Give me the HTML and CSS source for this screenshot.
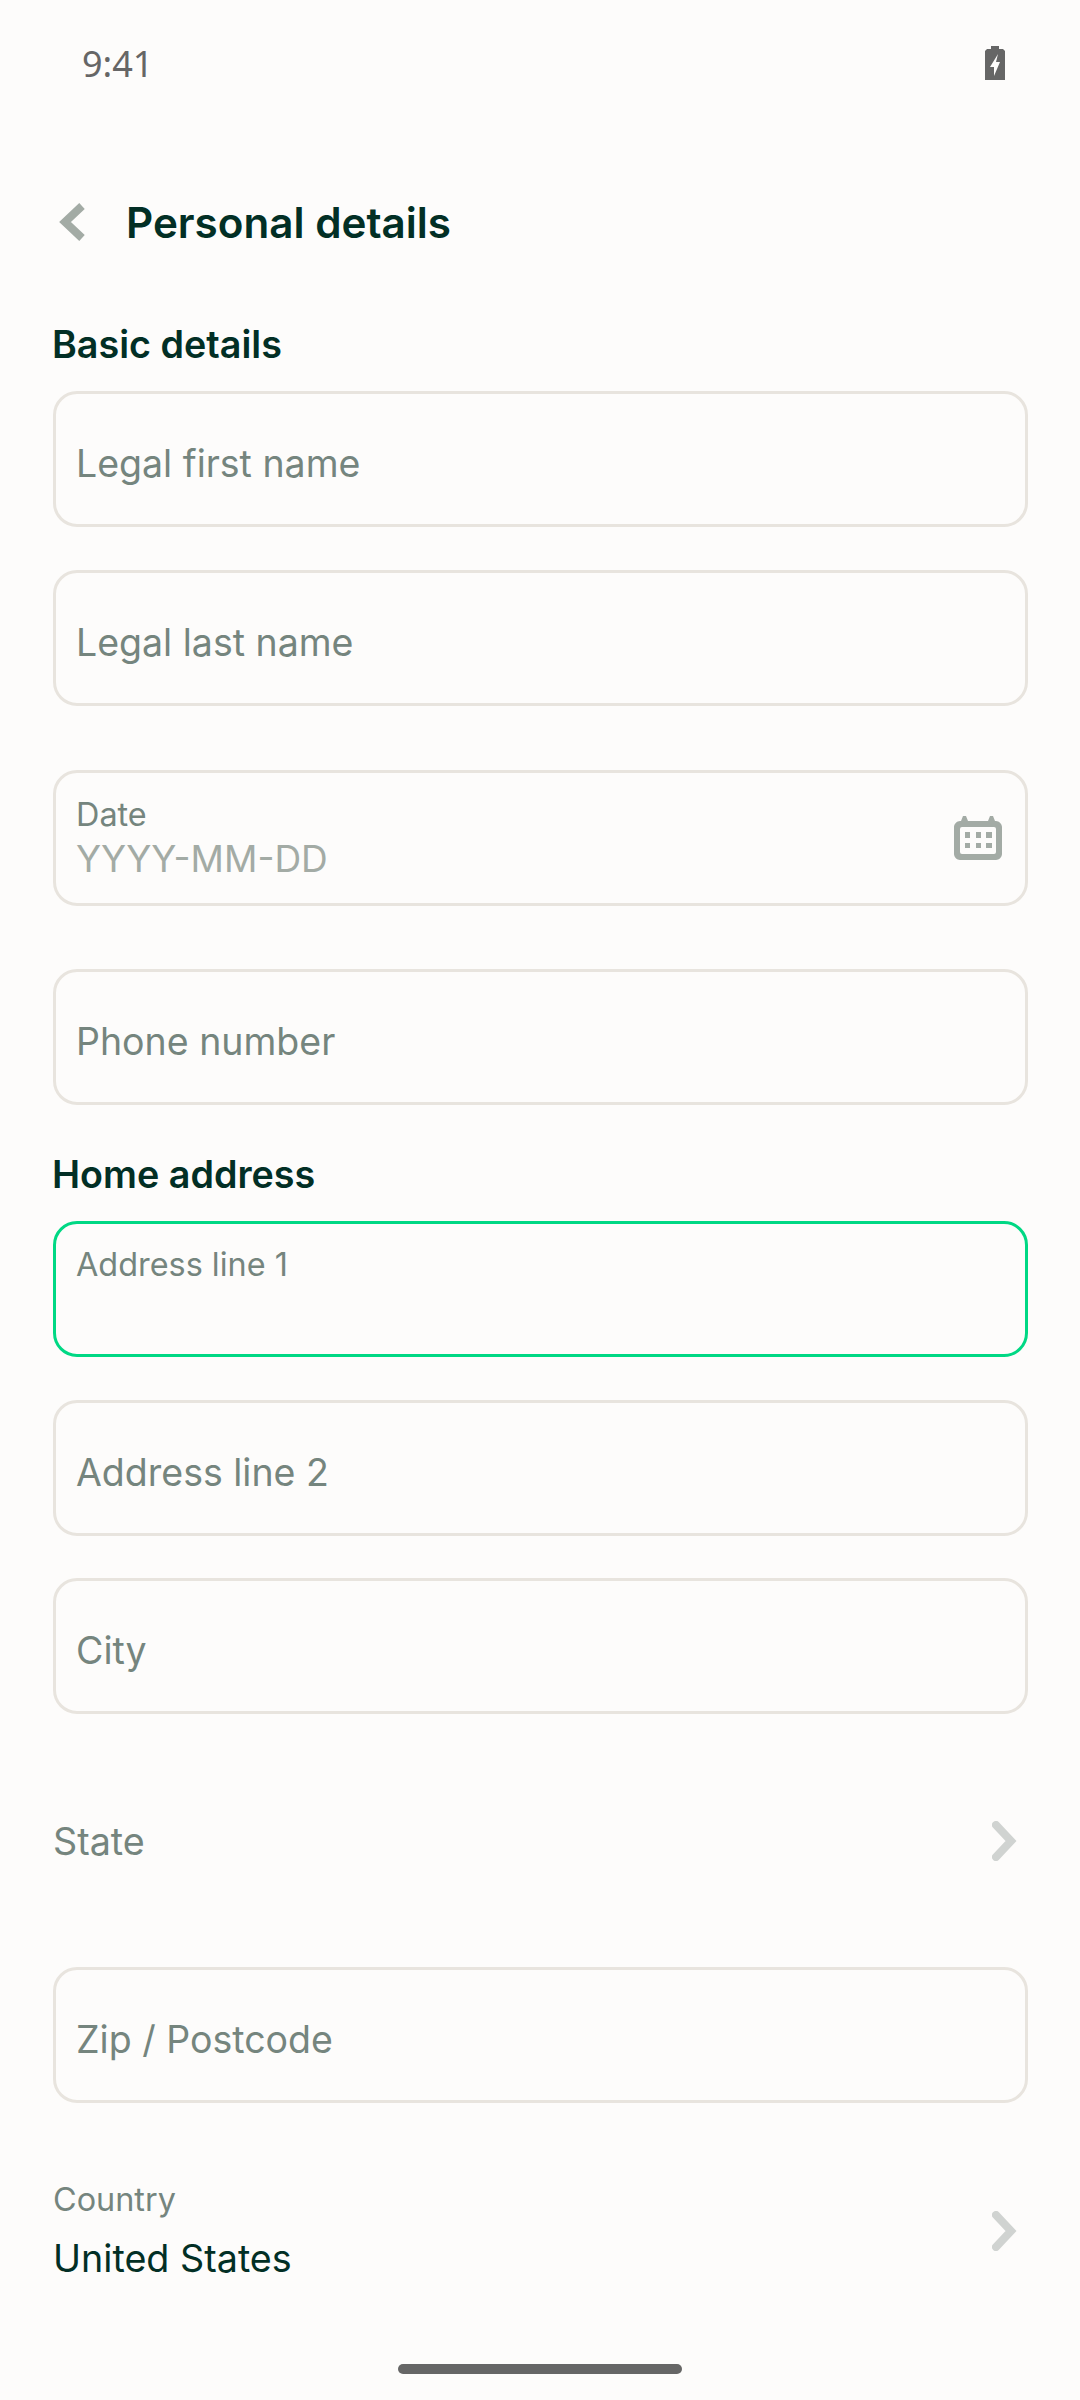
FILE: index.html
```html
<!DOCTYPE html>
<html lang="en">
<head>
    <meta charset="UTF-8">
    <meta name="viewport" content="width=device-width, initial-scale=1.0">
    <title>Personal details</title>
    <link rel="stylesheet" href="styles.css">
</head>
<body>
    <div class="status-bar">
        <span class="status-time">9:41</span>
        <svg class="status-battery" width="20" height="34" viewBox="0 0 20 34">
            <path fill="#666" d="M6 0h8v3h4l2 2v29H0V5l2-2h4z"/>
            <path fill="#fdfcfb" d="M13 8 5 21h4v9l6-14h-4z"/>
        </svg>
    </div>

    <div class="header">
        <svg class="back-icon" width="28" height="38" viewBox="0 0 28 38">
            <path fill="none" stroke="#a3aba5" stroke-width="8" stroke-linejoin="miter" d="M25 3 8 19l17 16"/>
        </svg>
        <h1 class="page-title">Personal details</h1>
    </div>

    <main class="content">
        <h2 class="section-title">Basic details</h2>
        <div class="field"><span class="placeholder">Legal first name</span></div>
        <div class="field field-near"><span class="placeholder">Legal last name</span></div>

        <div class="field field-date field-filled">
            <div>
                <div class="field-label">Date</div>
                <div class="field-hint">YYYY-MM-DD</div>
            </div>
            <svg class="calendar-icon" width="48" height="44" viewBox="0 0 48 44">
                <path fill="#a3aba5" d="M9 0h3l2 5h20l2-5h3l2 5h1c3 0 6 3 6 6v27c0 3-3 6-6 6H6c-3 0-6-3-6-6V11c0-3 3-6 6-6h1z"/>
                <rect x="6" y="11" width="36" height="27" rx="2" fill="#fdfcfb"/>
                <path fill="#a3aba5" d="M11 16h5v6h-5zM22 16h5v6h-5zM32 16h6v6h-6zM11 27h5v5h-5zM22 27h5v5h-5zM32 27h6v5h-6z"/>
            </svg>
        </div>
        <div class="field field-far"><span class="placeholder">Phone number</span></div>

        <h2 class="section-title section-title-next">Home address</h2>
        <div class="field field-active">
            <div class="field-label">Address line 1</div>
        </div>
        <div class="field field-near"><span class="placeholder">Address line 2</span></div>
        <div class="field field-tight"><span class="placeholder">City</span></div>

        <div class="select-row">
            <span class="select-text">State</span>
            <svg class="chevron" width="26" height="40" viewBox="0 0 26 40">
                <path fill="none" stroke="#d0d3d1" stroke-width="8" stroke-linecap="round" d="M4 4l15 16L4 36"/>
            </svg>
        </div>

        <div class="field"><span class="placeholder">Zip / Postcode</span></div>

        <div class="select-row select-row-filled">
            <div>
                <div class="select-label">Country</div>
                <div class="select-value">United States</div>
            </div>
            <svg class="chevron" width="26" height="40" viewBox="0 0 26 40">
                <path fill="none" stroke="#d0d3d1" stroke-width="8" stroke-linecap="round" d="M4 4l15 16L4 36"/>
            </svg>
        </div>
    </main>

    <div class="home-bar"></div>
</body>
</html>
```

FILE: styles.css
```css
* {
    box-sizing: border-box;
}

body {
    margin: 0;
    width: 1080px;
    height: 2400px;
    overflow: hidden;
    background-color: #fdfcfb;
    color: #022f25;
    font-family: "Inter", "Liberation Sans", sans-serif;
}

.status-bar {
    height: 126px;
    display: flex;
    align-items: center;
    justify-content: space-between;
    padding: 0 75px 0 82px;
}

.status-time {
    font-family: "Noto Sans", sans-serif;
    font-size: 36px;
    color: #666;
}

.header {
    height: 190px;
    display: flex;
    align-items: center;
    padding: 2px 0 0 57px;
}

.back-icon {
    margin-right: 41px;
}

.page-title {
    margin: 0;
    font-size: 42.2px;
    font-weight: 600;
    color: #022f25;
}

.content {
    padding: 0 52px 0 53px;
}

.section-title {
    margin: 0 0 19px -1px;
    height: 56px;
    line-height: 56px;
    font-size: 37.7px;
    font-weight: 600;
    color: #022f25;
}

.section-title-next {
    margin-top: 41px;
}

.field {
    height: 136px;
    display: flex;
    align-items: center;
    justify-content: space-between;
    padding: 9px 20px 0;
    border: 3px solid #e8e4de;
    border-radius: 24px;
}

.field-near {
    margin-top: 43px;
}

.field-tight {
    margin-top: 42px;
}

.field-date {
    margin-top: 64px;
}

.field-far {
    margin-top: 63px;
}

.placeholder {
    font-size: 37.5px;
    color: #75857e;
}

.field-filled {
    padding-top: 0;
}

.field-label {
    font-size: 32.4px;
    color: #75857e;
}

.field-hint {
    margin-top: 2px;
    font-size: 37px;
    color: #a3aba5;
}

.calendar-icon {
    margin-right: 3px;
}

.field-active {
    align-items: flex-start;
    padding-top: 21px;
    border-color: #00d884;
}

.select-row {
    height: 253px;
    display: flex;
    align-items: center;
    justify-content: space-between;
    padding-right: 10px;
    font-size: 37.7px;
}

.select-text {
    color: #75857e;
}

.select-row-filled {
    height: 255px;
}

.select-label {
    font-size: 32.4px;
    color: #75857e;
}

.select-value {
    margin-top: 16px;
    font-size: 37.7px;
    color: #022f25;
}

.home-bar {
    width: 284px;
    height: 10px;
    margin: 6px auto 0;
    border-radius: 5px;
    background-color: #666;
}
```
